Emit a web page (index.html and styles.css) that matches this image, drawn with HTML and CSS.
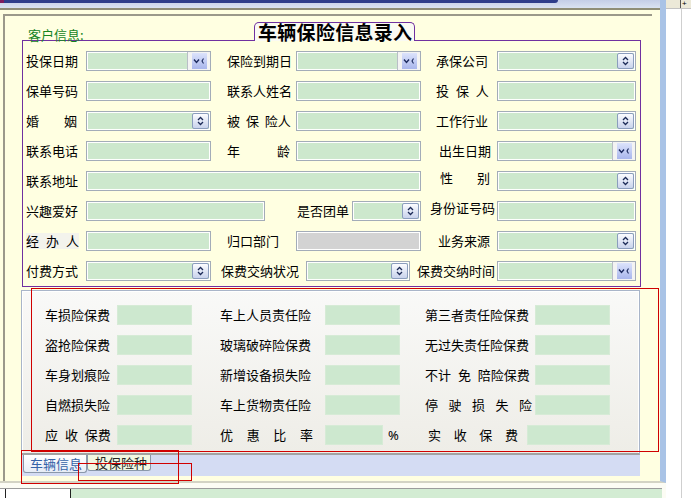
FILE: index.html
```html
<!DOCTYPE html>
<html lang="zh-CN">
<head>
<meta charset="utf-8">
<title>车辆保险信息录入</title>
<link rel="stylesheet" href="styles.css">
</head>
<body>
<div class="screen">
  <div class="left">
    <div class="win">
      <div class="win-top"><div class="titlebar"></div></div>
      <div class="win-line"></div>
      <div class="win-body">
        <div class="frame">
          <div class="fs-head">
            <div class="fs-lead"><span class="legend">客户信息:</span></div>
            <div class="title">车辆保险信息录入</div>
            <div class="fs-tail"></div>
          </div>
          <div class="fs-body">
            <div class="row">
              <div class="lbc w60">投保日期</div>
              <div class="fld date w125"><div class="dpk"><div class="dbtn"><svg viewBox="0 0 13 16" width="13" height="16"><path d="M2 6.5 L4.5 9.5 L7 6.5" fill="none" stroke="#1c2a5e" stroke-width="1.4"/><path d="M11.5 5.5 L10 8 L11.5 10.5" fill="none" stroke="#1c2a5e" stroke-width="1.1"/></svg></div></div></div>
              <div class="lbc w85 pl16">保险到期日</div>
              <div class="fld date w125"><div class="dpk"><div class="dbtn"><svg viewBox="0 0 13 16" width="13" height="16"><path d="M2 6.5 L4.5 9.5 L7 6.5" fill="none" stroke="#1c2a5e" stroke-width="1.4"/><path d="M11.5 5.5 L10 8 L11.5 10.5" fill="none" stroke="#1c2a5e" stroke-width="1.1"/></svg></div></div></div>
              <div class="lbc w76 pl15">承保公司</div>
              <div class="fld sel w139"><span class="sbtn"><svg viewBox="0 0 15 14" width="15" height="14"><path d="M5 6 L7.5 3.5 L10 6 M5 8 L7.5 10.5 L10 8" fill="none" stroke="#1d2b58" stroke-width="1.3"/></svg></span></div>
            </div>
            <div class="row">
              <div class="lbc w60">保单号码</div>
              <div class="fld w125"></div>
              <div class="lbc w85 pl16">联系人姓名</div>
              <div class="fld w125"></div>
              <div class="lbc w76 pl15 sp">投 保 人</div>
              <div class="fld w139"></div>
            </div>
            <div class="row">
              <div class="lbc w60"><span class="spread s51"><span>婚</span><span>姻</span></span></div>
              <div class="fld sel w125"><span class="sbtn"><svg viewBox="0 0 15 14" width="15" height="14"><path d="M5 6 L7.5 3.5 L10 6 M5 8 L7.5 10.5 L10 8" fill="none" stroke="#1d2b58" stroke-width="1.3"/></svg></span></div>
              <div class="lbc w85 pl16 sp3">被 保 险人</div>
              <div class="fld w125"></div>
              <div class="lbc w76 pl15">工作行业</div>
              <div class="fld sel w139"><span class="sbtn"><svg viewBox="0 0 15 14" width="15" height="14"><path d="M5 6 L7.5 3.5 L10 6 M5 8 L7.5 10.5 L10 8" fill="none" stroke="#1d2b58" stroke-width="1.3"/></svg></span></div>
            </div>
            <div class="row">
              <div class="lbc w60">联系电话</div>
              <div class="fld w125"></div>
              <div class="lbc w85 pl16"><span class="spread s63"><span>年</span><span>龄</span></span></div>
              <div class="fld w125"></div>
              <div class="lbc w76 pl18">出生日期</div>
              <div class="fld date w139"><div class="dpk"><div class="dbtn"><svg viewBox="0 0 13 16" width="13" height="16"><path d="M2 6.5 L4.5 9.5 L7 6.5" fill="none" stroke="#1c2a5e" stroke-width="1.4"/><path d="M11.5 5.5 L10 8 L11.5 10.5" fill="none" stroke="#1c2a5e" stroke-width="1.1"/></svg></div></div></div>
            </div>
            <div class="row">
              <div class="lbc w60">联系地址</div>
              <div class="fld w335"></div>
              <div class="lbc w76 pl19 up"><span class="spread s50"><span>性</span><span>别</span></span></div>
              <div class="fld sel w139"><span class="sbtn"><svg viewBox="0 0 15 14" width="15" height="14"><path d="M5 6 L7.5 3.5 L10 6 M5 8 L7.5 10.5 L10 8" fill="none" stroke="#1d2b58" stroke-width="1.3"/></svg></span></div>
            </div>
            <div class="row">
              <div class="lbc w60">兴趣爱好</div>
              <div class="fld w179"></div>
              <div class="lbc w87 pl32">是否团单</div>
              <div class="fld sel w69"><span class="sbtn"><svg viewBox="0 0 15 14" width="15" height="14"><path d="M5 6 L7.5 3.5 L10 6 M5 8 L7.5 10.5 L10 8" fill="none" stroke="#1d2b58" stroke-width="1.3"/></svg></span></div>
              <div class="lbc w76 pl9 up">身份证号码</div>
              <div class="fld w139"></div>
            </div>
            <div class="row">
              <div class="lbc w60"><span class="spread s53 shade"><span>经</span><span>办</span><span>人</span></span></div>
              <div class="fld w125"></div>
              <div class="lbc w85 pl16">归口部门</div>
              <div class="fld dis w125"></div>
              <div class="lbc w76 pl17">业务来源</div>
              <div class="fld sel w139"><span class="sbtn"><svg viewBox="0 0 15 14" width="15" height="14"><path d="M5 6 L7.5 3.5 L10 6 M5 8 L7.5 10.5 L10 8" fill="none" stroke="#1d2b58" stroke-width="1.3"/></svg></span></div>
            </div>
            <div class="row">
              <div class="lbc w60">付费方式</div>
              <div class="fld sel w125"><span class="sbtn"><svg viewBox="0 0 15 14" width="15" height="14"><path d="M5 6 L7.5 3.5 L10 6 M5 8 L7.5 10.5 L10 8" fill="none" stroke="#1d2b58" stroke-width="1.3"/></svg></span></div>
              <div class="lbc w95 pl10">保费交纳状况</div>
              <div class="fld sel w104"><span class="sbtn"><svg viewBox="0 0 15 14" width="15" height="14"><path d="M5 6 L7.5 3.5 L10 6 M5 8 L7.5 10.5 L10 8" fill="none" stroke="#1d2b58" stroke-width="1.3"/></svg></span></div>
              <div class="lbc w87 pl7">保费交纳时间</div>
              <div class="fld date w139"><div class="dpk"><div class="dbtn"><svg viewBox="0 0 13 16" width="13" height="16"><path d="M2 6.5 L4.5 9.5 L7 6.5" fill="none" stroke="#1c2a5e" stroke-width="1.4"/><path d="M11.5 5.5 L10 8 L11.5 10.5" fill="none" stroke="#1c2a5e" stroke-width="1.1"/></svg></div></div></div>
            </div>
          </div>

          <div class="panel">
            <div class="prow">
              <div class="lbc w72">车损险保费</div>
              <div class="pf w75"></div>
              <div class="lbc w133 pl28">车上人员责任险</div>
              <div class="pf w75"></div>
              <div class="lbc w135 pl25">第三者责任险保费</div>
              <div class="pf w75"></div>
            </div>
            <div class="prow">
              <div class="lbc w72">盗抢险保费</div>
              <div class="pf w75"></div>
              <div class="lbc w133 pl28">玻璃破碎险保费</div>
              <div class="pf w75"></div>
              <div class="lbc w135 pl25">无过失责任险保费</div>
              <div class="pf w75"></div>
            </div>
            <div class="prow">
              <div class="lbc w72">车身划痕险</div>
              <div class="pf w75"></div>
              <div class="lbc w133 pl28">新增设备损失险</div>
              <div class="pf w75"></div>
              <div class="lbc w135 pl25 sp">不计 免 陪险保费</div>
              <div class="pf w75"></div>
            </div>
            <div class="prow">
              <div class="lbc w72">自燃损失险</div>
              <div class="pf w75"></div>
              <div class="lbc w133 pl28">车上货物责任险</div>
              <div class="pf w75"></div>
              <div class="lbc w135 pl25"><span class="spread s107"><span>停</span><span>驶</span><span>损</span><span>失</span><span>险</span></span></div>
              <div class="pf w75"></div>
            </div>
            <div class="prow">
              <div class="lbc w72 sp">应 收 保费</div>
              <div class="pf w75"></div>
              <div class="lbc w133 pl28"><span class="spread s93"><span>优</span><span>惠</span><span>比</span><span>率</span></span></div>
              <div class="pf w58"></div>
              <div class="lbc w20 pl5 pct">%</div>
              <div class="lbc w124 pl25"><span class="spread s90"><span>实</span><span>收</span><span>保</span><span>费</span></span></div>
              <div class="pf w83"></div>
            </div>
          </div>

          <div class="tabstrip">
            <div class="tab tab-a">车辆信息</div>
            <div class="tab tab-b">投保险种</div>
          </div>
        </div>
      </div>
    </div>
    <div class="foot">
      <div class="foot-row">
        <div class="fc0"></div>
        <div class="fc1"></div>
        <div class="fc2"></div>
      </div>
    </div>
  </div>
  <div class="sheet">
    <div class="sheet-head"><div class="sh-a"></div><div class="sh-b">+</div></div>
    <div class="sheet-body"></div>
  </div>

  <div class="mark m1"></div>
  <div class="mark m2"></div>
  <div class="mark m3"></div>
</div>
</body>
</html>
```

FILE: styles.css
```css
* { box-sizing: border-box; }
html, body { margin: 0; padding: 0; }
body {
  width: 691px;
  height: 498px;
  overflow: hidden;
  background: #ffffff;
  font-family: "Noto Sans CJK SC", "Noto Sans", sans-serif;
  font-size: 13px;
  color: #000;
}
.screen { position: relative; display: flex; width: 691px; height: 498px; }
.left { width: 666px; display: flex; flex-direction: column; }

/* window chrome */
.win {
  height: 483px;
  display: flex;
  flex-direction: column;
  background: #ffffe1;
  border-right: 6px solid #a9c3e6;
  border-bottom: 2px solid #d3d3c4;
}
.win-top { height: 8px; background: linear-gradient(#c4cde7, #dae2f1); }
.titlebar {
  width: 558px;
  height: 3px;
  background: linear-gradient(to right, #7d1c5e 0, #7d1c5e 4px, #2f3d8a 4px);
  border-bottom-right-radius: 3px;
}
.win-line { height: 2px; background: #8f8d77; }
.win-body { flex: 1; padding: 4px 0 0 3px; }
.frame {
  width: 649px;
  height: 467px;
  border-top: 2px solid #9b998a;
  border-left: 2px solid #9b998a;
}

/* group box */
.fs-head { display: flex; height: 19px; margin: 6px 0 0 17px; width: 619px; }
.fs-lead {
  width: 232px;
  border-bottom: 1px solid #7030a0;
  display: flex;
  align-items: flex-end;
  padding-left: 6px;
}
.legend { color: #16851f; line-height: 14px; white-space: nowrap; margin-bottom: -2px; }
.title {
  width: 161px;
  border: 1px solid #7030a0;
  border-bottom: none;
  border-radius: 5px 5px 0 0;
  background: #fafaf3;
  font-weight: 700;
  font-size: 19px;
  line-height: 18px;
  letter-spacing: 0.3px;
  padding-left: 3px;
  white-space: nowrap;
}
.fs-tail { flex: 1; border-bottom: 1px solid #7030a0; }
.fs-body {
  margin-left: 17px;
  width: 619px;
  height: 246px;
  border: 1px solid #7030a0;
  border-top: none;
  padding-top: 5px;
}
.row { display: flex; align-items: center; height: 30px; padding-left: 3px; }

/* labels */
.lbc { flex: none; white-space: nowrap; line-height: 16px; }
.sp { word-spacing: 4px; }
.sp3 { word-spacing: 3px; }
.spread { display: flex; justify-content: space-between; }
.shade { background: #f3f3ec; }
.up { margin-bottom: 6px; }
.pct { font-family: "Noto Sans", sans-serif; }

/* inputs */
.fld {
  flex: none;
  height: 20px;
  border: 1px solid #a3acb8;
  box-shadow: inset 0 0 0 1px #ffffff;
  background: #cde8cd;
  display: flex;
  align-items: center;
  justify-content: flex-end;
}
.fld.dis { background: #d3d3d3; }
.fld.sel { padding-right: 1px; }
.sbtn {
  width: 17px;
  height: 16px;
  border: 1px solid #8b9dbd;
  border-radius: 2px;
  background: linear-gradient(#fbfcff, #c9d3ec);
  display: flex;
  align-items: center;
  justify-content: center;
}
.sbtn svg { display: block; }
.dpk {
  width: 23px;
  height: 18px;
  border-left: 1px solid #b9bec7;
  background: #f3f3f3;
  padding: 1px 3px 1px 4px;
}
.dbtn {
  height: 100%;
  background: linear-gradient(#dce3fb, #a9b6ec);
  overflow: hidden;
}
.dbtn svg { display: block; }

/* lower panel */
.panel {
  margin: 3px 0 0 16px;
  width: 619px;
  height: 165px;
  border: 1px solid #a9b5c9;
  border-bottom: 2px solid #a2a2a2;
  box-shadow: inset 1px 1px 0 #ffffff, inset -1px 0 0 #ffffff;
  background: linear-gradient(#f9f9f8, #eeede7);
  padding: 9px 0 0 23px;
}
.prow { display: flex; align-items: center; height: 30px; }
.pf {
  flex: none;
  height: 20px;
  background: #cde8cf;
  border: 1px solid #d6ebd6;
}

/* tabs */
.tabstrip {
  margin-left: 17px;
  width: 618px;
  height: 21px;
  background: #d4dcf3;
  display: flex;
  align-items: flex-start;
  padding-left: 1px;
}
.tab {
  width: 64px;
  border: 1px solid #8a98aa;
  border-top: none;
  border-radius: 0 0 3px 3px;
  line-height: 15px;
  white-space: nowrap;
}
.tab-a {
  height: 18px;
  padding: 1px 0 0 6px;
  background: linear-gradient(#ffffff, #e6ecf6);
  color: #3563a8;
}
.tab-b {
  height: 16px;
  padding: 0 0 0 7px;
  background: #f1f7e2;
  color: #222;
}

/* bottom grid strip */
.foot { height: 15px; padding-top: 5px; background: #fcfcf4; }
.foot-row { display: flex; width: 662px; height: 10px; border-top: 1px solid #9c9c9c; }
.fc0 { width: 5px; background: #fff; }
.fc1 { width: 66px; background: #fff; border-left: 1px solid #222; border-right: 1px solid #222; }
.fc2 { flex: 1; background: #d3ecd3; }

/* right sheet */
.sheet { width: 25px; display: flex; flex-direction: column; background: #fff; }
.sheet-head { display: flex; height: 9px; border-bottom: 1px solid #c3c3c3; }
.sh-a { width: 15px; background: #ece9d8; border-right: 1px solid #555; }
.sh-b {
  flex: 1;
  background: #ece9d8;
  font-family: "Liberation Sans", sans-serif;
  font-size: 8px;
  line-height: 8px;
  padding-left: 1px;
}
.sheet-body {
  flex: 1;
  background: linear-gradient(to right, transparent 15px, #cfcfcf 15px, #cfcfcf 16px, transparent 16px);
}

/* red selection marks drawn over the form */
.mark { position: absolute; border: 1px solid #d00000; pointer-events: none; }
.m1 { left: 31px; top: 288px; width: 628px; height: 164px; }
.m2 { left: 21px; top: 450px; width: 158px; height: 34px; }
.m3 { left: 78px; top: 463px; width: 114px; height: 18px; }

/* widths */
.w20 { width: 20px; } .w58 { width: 58px; } .w60 { width: 60px; } .w69 { width: 69px; }
.w72 { width: 72px; } .w75 { width: 75px; } .w76 { width: 76px; } .w83 { width: 83px; }
.w85 { width: 85px; } .w87 { width: 87px; } .w95 { width: 95px; } .w104 { width: 104px; }
.w124 { width: 124px; } .w125 { width: 125px; } .w133 { width: 133px; } .w135 { width: 135px; }
.w139 { width: 139px; } .w179 { width: 179px; } .w335 { width: 335px; }
.s50 { width: 50px; } .s51 { width: 51px; } .s53 { width: 53px; } .s63 { width: 63px; }
.s90 { width: 90px; } .s93 { width: 93px; } .s107 { width: 107px; }
/* paddings */
.pl5 { padding-left: 5px; } .pl7 { padding-left: 7px; } .pl9 { padding-left: 9px; }
.pl10 { padding-left: 10px; } .pl15 { padding-left: 15px; } .pl16 { padding-left: 16px; }
.pl17 { padding-left: 17px; } .pl18 { padding-left: 18px; } .pl19 { padding-left: 19px; }
.pl25 { padding-left: 25px; } .pl28 { padding-left: 28px; } .pl32 { padding-left: 32px; }
```
